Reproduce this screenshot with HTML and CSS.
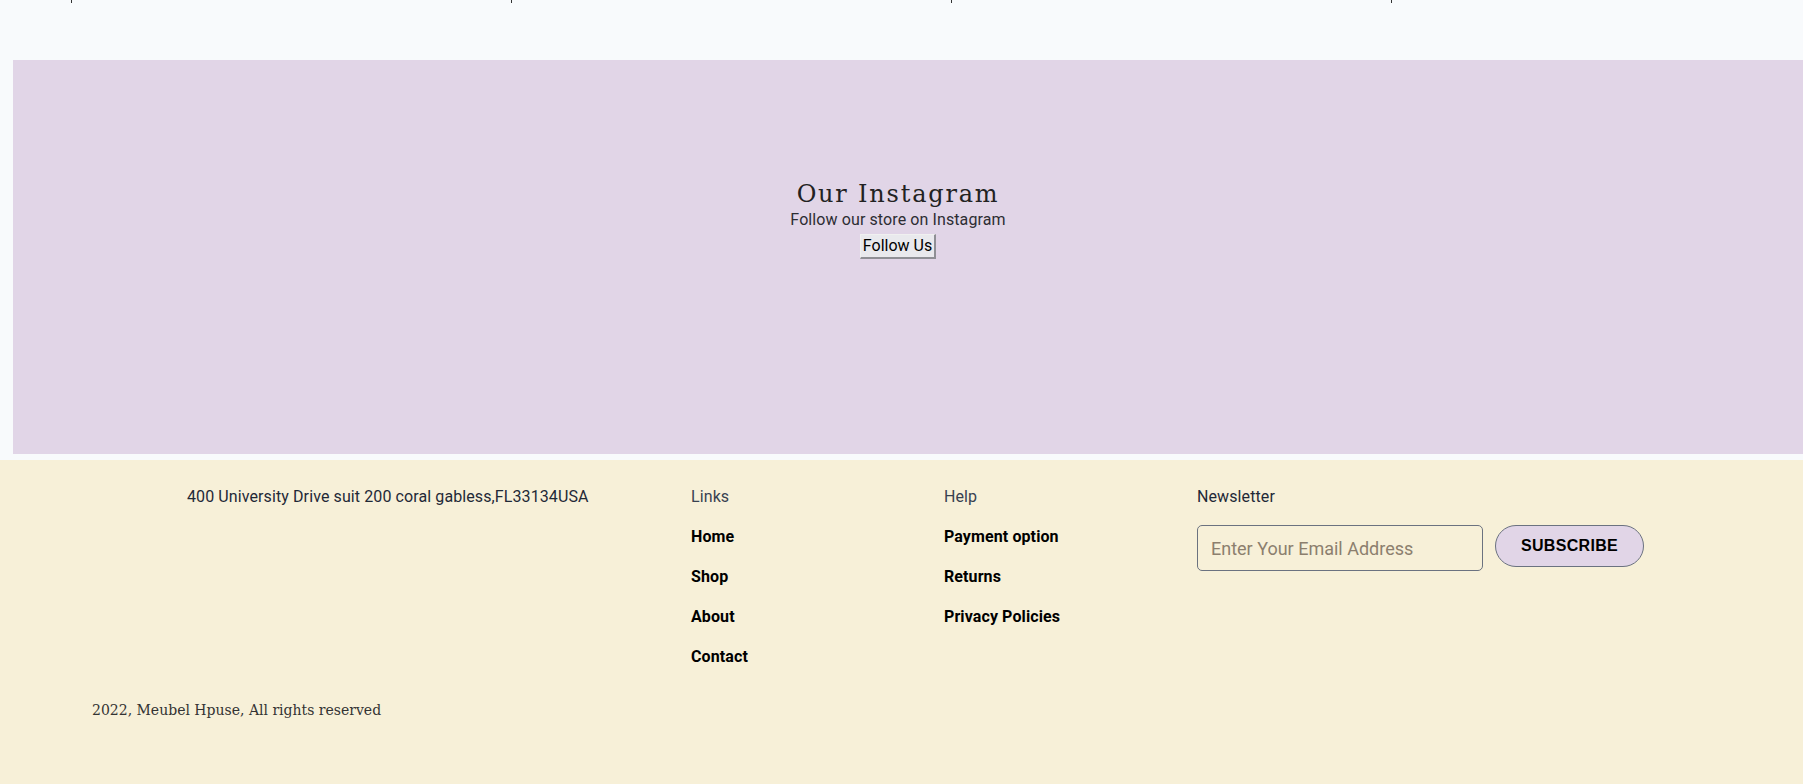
FILE: index.html
```html
<!DOCTYPE html>
<html lang="en">
<head>
<meta charset="utf-8">
<title>Meubel House</title>
<link rel="stylesheet" href="styles.css">
</head>
<body>
<div class="top-strip">
  <span class="tick"></span>
  <span class="tick"></span>
  <span class="tick"></span>
  <span class="tick"></span>
</div>
<section class="insta">
  <h2 class="insta-title">Our Instagram</h2>
  <p class="insta-sub">Follow our store on Instagram</p>
  <button class="insta-btn">Follow Us</button>
</section>
<footer class="footer">
  <div class="footer-cols">
    <div class="col col-address">400 University Drive suit 200 coral gabless,FL33134USA</div>
    <div class="col">
      <div class="col-title">Links</div>
      <a class="col-link" href="#">Home</a>
      <a class="col-link" href="#">Shop</a>
      <a class="col-link" href="#">About</a>
      <a class="col-link" href="#">Contact</a>
    </div>
    <div class="col">
      <div class="col-title">Help</div>
      <a class="col-link" href="#">Payment option</a>
      <a class="col-link" href="#">Returns</a>
      <a class="col-link" href="#">Privacy Policies</a>
    </div>
    <div class="col">
      <div class="col-title news-title">Newsletter</div>
      <form class="news-form">
        <input class="news-input" type="email" placeholder="Enter Your Email Address">
        <button class="news-btn" type="button">SUBSCRIBE</button>
      </form>
    </div>
  </div>
  <p class="copyright">2022, Meubel Hpuse, All rights reserved</p>
</footer>
</body>
</html>
```
FILE: styles.css
```css
* { box-sizing: border-box; }
html, body { margin: 0; padding: 0; }
body {
  background: #f8fafc;
  font-family: Roboto, "Noto Sans", sans-serif;
  font-size: 16px;
  line-height: 20px;
  letter-spacing: 0.1px;
  color: #1f2937;
  overflow-x: hidden;
}
.top-strip {
  height: 60px;
  display: flex;
  padding-left: 71px;
  gap: 439px;
}
.tick {
  display: block;
  width: 1px;
  height: 3px;
  background: #333;
}
.insta {
  margin-left: 13px;
  height: 394px;
  background: #e1d5e7;
  display: flex;
  flex-direction: column;
  align-items: center;
  padding-top: 120px;
  padding-right: 20px;
}
.insta-title {
  margin: 0;
  font-family: "DejaVu Serif", serif;
  font-weight: normal;
  font-size: 24px;
  line-height: 28px;
  letter-spacing: 1.8px;
  color: #222;
}
.insta-sub {
  margin: 0;
  line-height: 23px;
  color: #2d2d33;
}
.insta-btn {
  margin-top: 3px;
  font-family: inherit;
  font-size: 16px;
  line-height: 20px;
  letter-spacing: 0;
  padding: 1px 2px;
  color: #000;
  background: #e9e9ed;
  border-style: solid;
  border-color: #f0f0f0 #8f8f95 #8f8f95 #f0f0f0;
  border-width: 1px 2px 2px 1px;
}
.footer {
  margin-top: 6px;
  background: #f7f0d8;
  min-height: 330px;
  padding-top: 27px;
}
.footer-cols {
  display: grid;
  grid-template-columns: 504px 253px 253px auto;
  padding-left: 187px;
}
.col {
  display: flex;
  flex-direction: column;
  gap: 20px;
}
.col-address { color: #1f2937; }
.col-title { color: #374151; }
.col-link {
  color: #000;
  font-weight: bold;
  text-decoration: none;
}
.news-title { color: #1f2937; }
.news-form {
  display: flex;
  align-items: flex-start;
  gap: 12px;
  margin: -2px 0 0;
}
.news-input {
  width: 286px;
  height: 46px;
  border: 1px solid #6b7280;
  border-radius: 5px;
  background: transparent;
  padding: 0 13px;
  font-family: inherit;
  font-size: 18px;
  color: #333;
}
.news-input::placeholder { color: #8c7f6e; }
.news-btn {
  width: 149px;
  height: 42px;
  border: 1px solid #6b7280;
  border-radius: 21px;
  background: #e1d5e7;
  font-family: "Liberation Sans", Arial, sans-serif;
  font-weight: bold;
  font-size: 16px;
  letter-spacing: 0.3px;
  color: #000;
  padding: 0;
}
.copyright {
  margin: 33px 0 0 92px;
  font-family: "DejaVu Serif", serif;
  font-size: 14px;
  line-height: 20px;
  letter-spacing: 0;
  color: #333;
}
```
